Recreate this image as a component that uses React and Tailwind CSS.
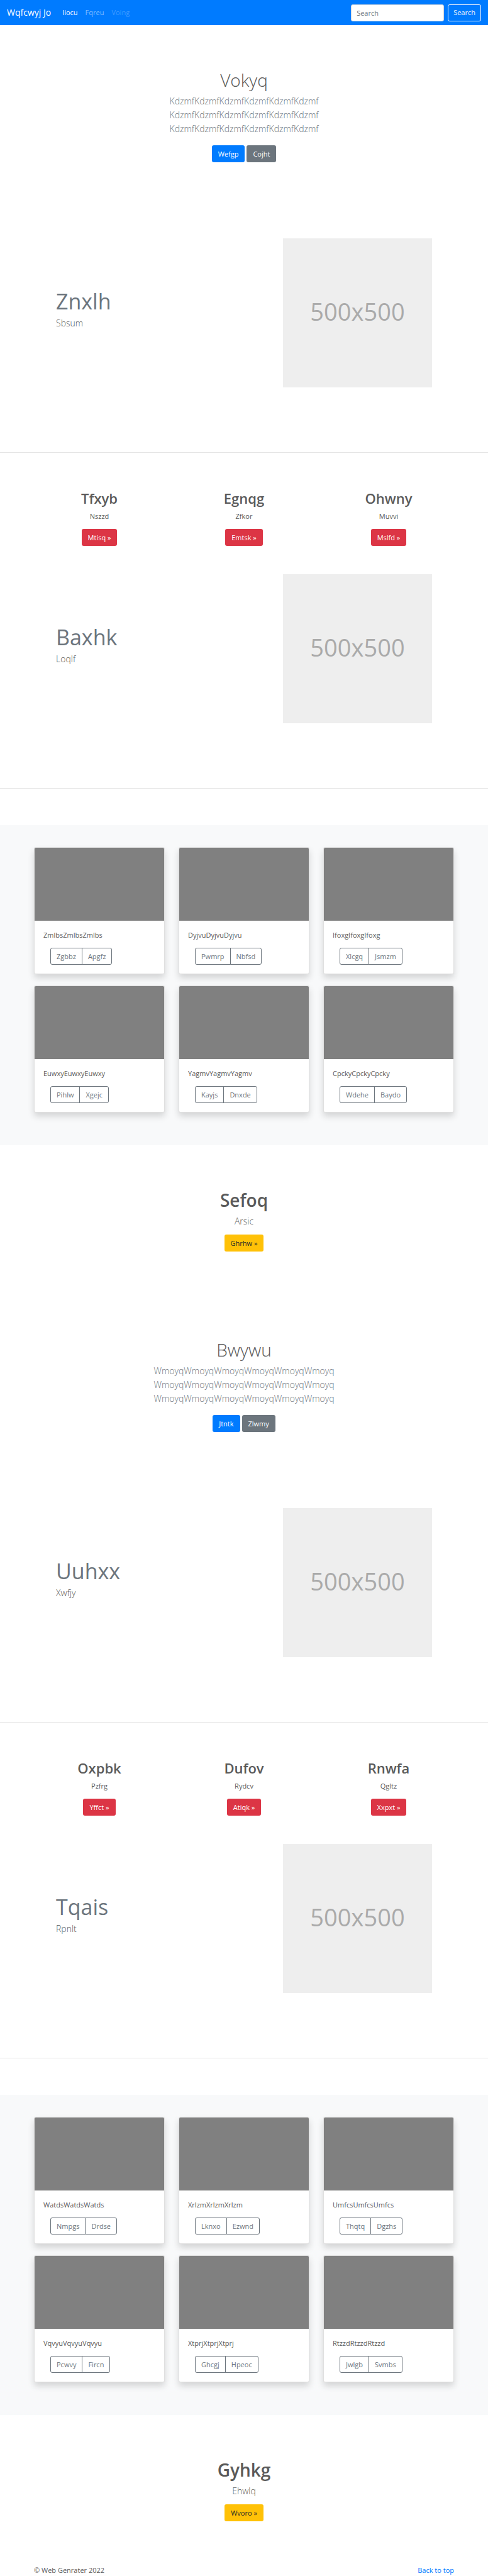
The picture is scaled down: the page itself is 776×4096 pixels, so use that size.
const halves = [
  {
    hero: {
      title: "Vokyq",
      line: "KdzmfKdzmfKdzmfKdzmfKdzmfKdzmf",
      primary: "Wefgp",
      secondary: "Cojht",
    },
    first: { title: "Znxlh", text: "Sbsum" },
    columns: [
      { title: "Tfxyb", text: "Nszzd", action: "Mtisq »" },
      { title: "Egnqg", text: "Zfkor", action: "Emtsk »" },
      { title: "Ohwny", text: "Muvvi", action: "Mslfd »" },
    ],
    second: { title: "Baxhk", text: "Loqlf" },
    cards: [
      { text: "ZmlbsZmlbsZmlbs", left: "Zgbbz", right: "Apgfz" },
      { text: "DyjvuDyjvuDyjvu", left: "Pwmrp", right: "Nbfsd" },
      { text: "IfoxgIfoxgIfoxg", left: "Xlcgq", right: "Jsmzm" },
      { text: "EuwxyEuwxyEuwxy", left: "Pihlw", right: "Xgejc" },
      { text: "YagmvYagmvYagmv", left: "Kayjs", right: "Dnxde" },
      { text: "CpckyCpckyCpcky", left: "Wdehe", right: "Baydo" },
    ],
    closing: { title: "Sefoq", text: "Arsic", action: "Ghrhw »" },
  },
  {
    hero: {
      title: "Bwywu",
      line: "WmoyqWmoyqWmoyqWmoyqWmoyqWmoyq",
      primary: "Jtntk",
      secondary: "Zlwmy",
    },
    first: { title: "Uuhxx", text: "Xwfjy" },
    columns: [
      { title: "Oxpbk", text: "Pzfrg", action: "Yffct »" },
      { title: "Dufov", text: "Rydcv", action: "Atiqk »" },
      { title: "Rnwfa", text: "Qgltz", action: "Xxpxt »" },
    ],
    second: { title: "Tqais", text: "Rpnlt" },
    cards: [
      { text: "WatdsWatdsWatds", left: "Nmpgs", right: "Drdse" },
      { text: "XrlzmXrlzmXrlzm", left: "Lknxo", right: "Ezwnd" },
      { text: "UmfcsUmfcsUmfcs", left: "Thqtq", right: "Dgzhs" },
      { text: "VqvyuVqvyuVqvyu", left: "Pcwvy", right: "Fircn" },
      { text: "XtprjXtprjXtprj", left: "Ghcgj", right: "Hpeoc" },
      { text: "RtzzdRtzzdRtzzd", left: "Jwlgb", right: "Svmbs" },
    ],
    closing: { title: "Gyhkg", text: "Ehwlq", action: "Wvoro »" },
  },
];

const tones = {
  primary: "bg-[#007bff] text-white",
  secondary: "bg-[#6c757d] text-white",
  danger: "bg-[#dc3545] text-white",
  warning: "bg-[#ffc107] text-[#212529]",
};

function Button({ tone, children }) {
  return (
    <a
      href="#"
      className={`flex h-[27px] items-center rounded-[3px] px-[10px] text-[11px] leading-[18px] ${tones[tone]}`}
    >
      {children}
    </a>
  );
}

function Navbar() {
  return (
    <nav className="flex h-10 items-center bg-[#007bff] px-[11px] text-[11px] leading-[18px] text-white">
      <a href="#" className="text-[14px]">
        Wqfcwyj Jo
      </a>
      <div className="ml-[18px] flex gap-3">
        <a href="#">Iiocu</a>
        <a href="#" className="text-white/50">
          Fqreu
        </a>
        <a href="#" className="text-white/25">
          Voing
        </a>
      </div>
      <form className="ml-auto flex gap-[6px]">
        <input
          type="search"
          aria-label="Search"
          placeholder="Search"
          className="h-[27px] w-[148px] rounded-[3px] border border-[#ced4da] bg-white px-2 text-[11px] text-[#495057] placeholder:text-[#6c757d]"
        />
        <button
          type="button"
          className="h-[27px] rounded-[3px] border border-[#f8f9fa] px-2 text-[#f8f9fa]"
        >
          Search
        </button>
      </form>
    </nav>
  );
}

function Hero({ title, line, primary, secondary }) {
  return (
    <section className="flex flex-col items-center pt-[70px] text-center">
      <h1 className="text-[28px] leading-[34px] font-light">{title}</h1>
      <p className="mt-[6px] text-[14px] leading-[22px] font-light text-[#6c757d]">
        {line}
        <br />
        {line}
        <br />
        {line}
      </p>
      <div className="mt-[15px] flex gap-[3px]">
        <Button tone="primary">{primary}</Button>
        <Button tone="secondary">{secondary}</Button>
      </div>
    </section>
  );
}

function Featurette({ title, text }) {
  return (
    <section className="mx-[89px] flex items-start justify-between">
      <div className="pt-[78px]">
        <h2 className="text-[34px] leading-[44px] text-[#6c757d]">{title}</h2>
        <p className="mt-[2px] text-[14px] leading-[22px] font-light">{text}</p>
      </div>
      <div
        role="img"
        aria-label="500x500"
        className="flex size-[237px] items-center justify-center bg-[#eee] pb-[6px] text-[38px] leading-[44px] text-[#aaa]"
      >
        500x500
      </div>
    </section>
  );
}

function Columns({ items }) {
  return (
    <section className="mx-[54px] grid grid-cols-3 gap-[22px]">
      {items.map((item) => (
        <div key={item.title} className="flex flex-col items-center">
          <h2 className="text-[22px] leading-[28px] font-semibold">{item.title}</h2>
          <p className="mt-[6px] mb-[11px] text-[11px] leading-[18px]">{item.text}</p>
          <Button tone="danger">{item.action}</Button>
        </div>
      ))}
    </section>
  );
}

function Card({ text, left, right }) {
  return (
    <article className="rounded-[3px] border border-black/12 bg-white shadow-[0_6px_11px_rgba(0,0,0,0.15)]">
      <div className="h-[116px] rounded-t-[2px] bg-[#808080]" />
      <div className="p-[14px] text-[11px] leading-[18px]">
        <p>{text}</p>
        <div className="mt-[11px] ml-[11px] flex text-[#6c757d]">
          <button
            type="button"
            className="h-[27px] rounded-l-[3px] border border-[#6c757d] px-[9px]"
          >
            {left}
          </button>
          <button
            type="button"
            className="-ml-px h-[27px] rounded-r-[3px] border border-[#6c757d] px-[9px]"
          >
            {right}
          </button>
        </div>
      </div>
    </article>
  );
}

function Closing({ title, text, action }) {
  return (
    <section className="flex flex-col items-center pt-[70px] pb-[69px]">
      <h2 className="text-[28px] leading-[34px] font-semibold">{title}</h2>
      <p className="mt-[6px] mb-[10px] text-[14px] leading-[22px] font-light">{text}</p>
      <Button tone="warning">{action}</Button>
    </section>
  );
}

function Half({ hero, first, columns, second, cards, closing }) {
  return (
    <>
      <Hero {...hero} />
      <div className="mt-[121px]">
        <Featurette {...first} />
      </div>
      <hr className="mt-[103px] mb-[58px] border-black/10" />
      <Columns items={columns} />
      <div className="mt-[45px]">
        <Featurette {...second} />
      </div>
      <hr className="mt-[103px] mb-[58px] border-black/10" />
      <section className="grid grid-cols-3 gap-x-[22px] gap-y-[18px] bg-[#f8f9fa] px-[54px] pt-[35px] pb-[52px]">
        {cards.map((card) => (
          <Card key={card.text} {...card} />
        ))}
      </section>
      <Closing {...closing} />
    </>
  );
}

export default function App() {
  return (
    <div className="bg-white font-['Open_Sans','Noto_Sans',sans-serif] text-[#5a5a5a]">
      <Navbar />
      <main>
        {halves.map((half) => (
          <Half key={half.hero.title} {...half} />
        ))}
      </main>
      <footer className="flex justify-between px-[54px] text-[11px] leading-[18px]">
        <p>© Web Genrater 2022</p>
        <a href="#" className="text-[#007bff]">
          Back to top
        </a>
      </footer>
    </div>
  );
}
